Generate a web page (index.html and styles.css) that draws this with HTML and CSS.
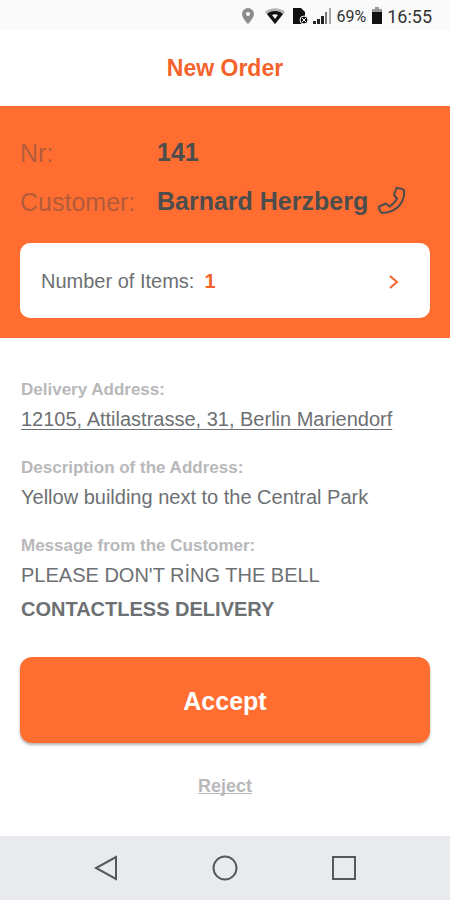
FILE: index.html
```html
<!DOCTYPE html>
<html lang="en">
<head>
    <meta charset="UTF-8">
    <meta name="viewport" content="width=device-width, initial-scale=1.0">
    <title>New Order</title>
    <link rel="stylesheet" href="styles.css">
</head>
<body>
    <div class="status-bar">
        <svg class="icon-pin" width="14" height="18" viewBox="0 0 14 18">
            <path fill="#8c8c8c" fill-rule="evenodd" d="M7 1a6 6 0 0 0-6 6c0 4 6 10 6 10s6-6 6-10a6 6 0 0 0-6-6zm0 4a2 2 0 1 1 0 4 2 2 0 0 1 0-4z"/>
        </svg>
        <svg class="icon-wifi" width="20" height="18" viewBox="0 0 20 18">
            <path fill="#b5b5b5" d="M0 5C5 0 15 0 20 5L10 17z"/>
            <path fill="#111" d="M2 7c4-4 12-4 16 0l-8 10z"/>
            <path fill="#f0f0f0" d="M7 8c2-1 4-1 6 0l-3 4z"/>
        </svg>
        <svg class="icon-sim" width="17" height="18" viewBox="0 0 17 18">
            <path fill="#111" d="M1 1h8l4 4v12H1z"/>
            <circle cx="12" cy="13" r="4" fill="#111" stroke="#fafafa"/>
            <path d="M10 11l4 4M14 11l-4 4" stroke="#fafafa"/>
        </svg>
        <svg class="icon-signal" width="18" height="18" viewBox="0 0 18 18">
            <path fill="#222" d="M0 14h3v3H0zM4 12h3v5H4zM8 9h3v8H8z"/>
            <path fill="#777" d="M12 5h2v12h-2z"/>
            <path fill="#aaa" d="M16 1h2v16h-2z"/>
        </svg>
        <span class="battery-level">69%</span>
        <svg class="icon-battery" width="12" height="18" viewBox="0 0 12 18">
            <path fill="#999" d="M4 0h4v2h3v4H1V2h3z"/>
            <path fill="#111" d="M1 5h10v12H1z"/>
        </svg>
        <span class="clock">16:55</span>
    </div>

    <header class="header">
        <h1>New Order</h1>
    </header>

    <section class="order">
        <dl class="order-info">
            <dt>Nr:</dt>
            <dd>141</dd>
            <dt>Customer:</dt>
            <dd>
                Barnard Herzberg
                <button class="call" type="button" aria-label="Call customer">
                    <svg width="28" height="28" viewBox="0 0 28 28" fill="none" stroke="#4d4d4d" stroke-width="2" stroke-linejoin="round">
                        <path d="M18.500 1Q23 1 26 3Q27 12 21 19Q14 26 4 26Q1 24 1 19.500L8 16.500L11.500 19.500Q17 16 19 11.500L16 8z"/>
                    </svg>
                </button>
            </dd>
        </dl>
        <button class="items" type="button">
            <span>Number of Items:</span>
            <strong>1</strong>
            <svg class="chevron" width="10" height="14" viewBox="0 0 10 14" fill="none" stroke="#f4632b" stroke-width="2">
                <path d="M1 1l7 6-7 6"/>
            </svg>
        </button>
    </section>

    <main class="details">
        <section class="detail">
            <h2>Delivery Address:</h2>
            <a href="#">12105, Attilastrasse, 31, Berlin Mariendorf</a>
        </section>
        <section class="detail">
            <h2>Description of the Address:</h2>
            <p>Yellow building next to the Central Park</p>
        </section>
        <section class="detail">
            <h2>Message from the Customer:</h2>
            <p>PLEASE DON'T RİNG THE BELL</p>
            <p class="contactless">CONTACTLESS DELIVERY</p>
        </section>
    </main>

    <div class="actions">
        <button class="accept" type="button">Accept</button>
        <button class="reject" type="button">Reject</button>
    </div>

    <nav class="nav-bar">
        <button type="button" aria-label="Back">
            <svg width="26" height="26" viewBox="0 0 26 26"><path d="M23 2v22L3 13z"/></svg>
        </button>
        <button type="button" aria-label="Home">
            <svg width="26" height="26" viewBox="0 0 26 26"><circle cx="13" cy="13" r="11.500"/></svg>
        </button>
        <button type="button" aria-label="Recent apps">
            <svg width="26" height="26" viewBox="0 0 26 26"><path d="M2 2h22v22H2z"/></svg>
        </button>
    </nav>
</body>
</html>
```
FILE: styles.css
```css
* {
    box-sizing: border-box;
}

body {
    display: flex;
    flex-direction: column;
    min-height: 100vh;
    margin: 0;
    background-color: #fff;
    color: #6d7073;
    font-family: "Liberation Sans", Arial, sans-serif;
    font-size: 20px;
}

button {
    padding: 0;
    border: none;
    background: none;
    color: inherit;
    font-family: inherit;
    cursor: pointer;
}

svg {
    display: block;
    flex-shrink: 0;
}

h1,
h2,
p,
dl,
dd {
    margin: 0;
}

.status-bar {
    display: flex;
    align-items: center;
    justify-content: flex-end;
    height: 30px;
    padding: 2px 18px 0 0;
    background-color: #fafafa;
    color: #333;
    font-family: Roboto, sans-serif;
    font-size: 16px;
}

.icon-wifi {
    margin-left: 10px;
}

.icon-sim {
    margin-left: 7px;
}

.icon-signal {
    margin-left: 4px;
}

.battery-level,
.icon-battery {
    margin-left: 5px;
}

.clock {
    margin-left: 4px;
    font-size: 18px;
}

.header {
    display: flex;
    align-items: center;
    justify-content: center;
    height: 76px;
}

.header h1 {
    color: #f4632b;
    font-size: 23px;
}

.order {
    padding: 22px 20px 20px;
    background-color: #ff6d31;
}

.order-info {
    display: grid;
    grid-template-columns: 137px 1fr;
    row-gap: 1px;
    font-size: 25px;
    line-height: 48px;
}

.order-info dt {
    padding-top: 3px;
    color: #b35c3b;
    line-height: 45px;
}

.order-info dd {
    display: flex;
    align-items: center;
    gap: 10px;
    color: #4d4d4d;
    font-weight: bold;
}

.items {
    display: flex;
    align-items: center;
    gap: 10px;
    width: 100%;
    margin-top: 18px;
    padding: 27px 31px 25px 21px;
    border-radius: 10px;
    background-color: #fff;
    font-size: 20px;
    line-height: 23px;
}

.items strong {
    color: #f4632b;
}

.chevron {
    margin-left: auto;
}

.details {
    display: flex;
    flex-direction: column;
    gap: 20px;
    padding: 40px 21px 31px;
    line-height: 34px;
}

.detail h2 {
    color: #b8b8ba;
    font-size: 17px;
    line-height: 24px;
}

.detail a {
    display: block;
    color: inherit;
    text-decoration-thickness: 1px;
    text-underline-offset: 3px;
    text-decoration-skip-ink: none;
}

.contactless {
    font-weight: bold;
}

.actions {
    display: flex;
    flex-direction: column;
    align-items: center;
    gap: 31px;
    padding: 0 20px;
}

.accept {
    width: 100%;
    padding: 29px 28px 27px;
    border-radius: 12px;
    background-color: #ff6d31;
    box-shadow: 0 2px 3px rgba(0, 0, 0, 0.3);
    color: #fff;
    font-size: 25px;
    font-weight: bold;
    line-height: 30px;
}

.reject {
    color: #b8b8ba;
    font-size: 18px;
    font-weight: bold;
    line-height: 24px;
    text-decoration: underline;
    text-decoration-skip-ink: none;
}

.nav-bar {
    display: flex;
    align-items: center;
    justify-content: center;
    gap: 93px;
    height: 64px;
    margin-top: auto;
    background-color: #e8eaed;
}

.nav-bar svg {
    fill: none;
    stroke: #55585c;
    stroke-width: 2;
}
```
